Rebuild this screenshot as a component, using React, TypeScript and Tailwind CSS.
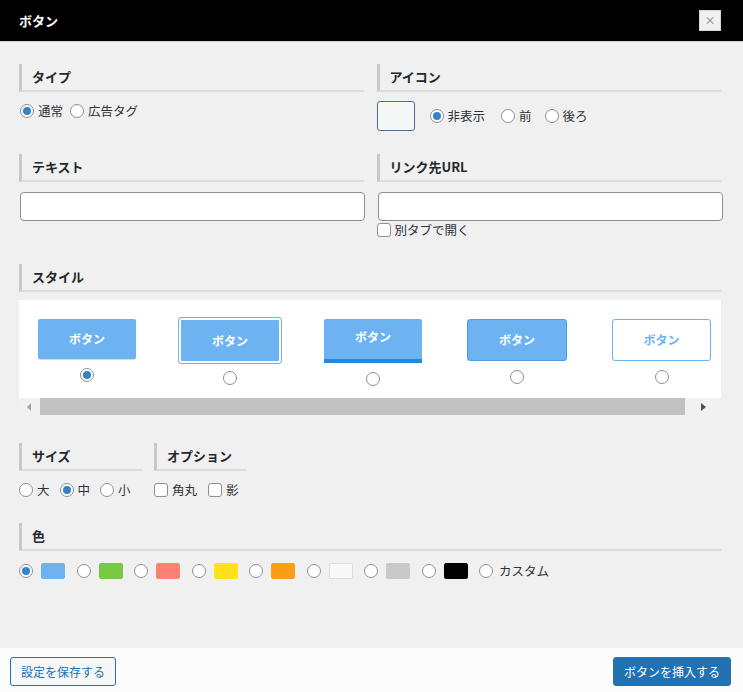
import React from 'react';

const font = { fontFamily: '"Noto Sans CJK JP", "Noto Sans", sans-serif' };

const Radio: React.FC<{ checked?: boolean }> = ({ checked }) => (
  <span className="flex items-center justify-center w-[14px] h-[14px] rounded-full border border-[#8c8f94] bg-white shrink-0">
    {checked && <span className="w-[8px] h-[8px] rounded-full bg-[#3582c4]"></span>}
  </span>
);

const Check: React.FC = () => (
  <span className="w-[14px] h-[14px] rounded-[3px] border border-[#8c8f94] bg-white shrink-0"></span>
);

const Heading: React.FC<{ children: React.ReactNode; className?: string }> = ({ children, className }) => (
  <div
    className={`flex items-center h-[28px] pl-[10px] border-l-[3px] border-l-[#c8c8c8] border-b-2 border-b-[#dcdcdc] text-[13px] font-semibold text-[#23282d] ${className ?? ''}`}
  >
    {children}
  </div>
);

const Opt: React.FC<{ checked?: boolean; label: string; className?: string }> = ({ checked, label, className }) => (
  <label className={`flex items-center gap-[4px] ${className ?? ''}`}>
    <Radio checked={checked} />
    <span>{label}</span>
  </label>
);

const swatches = ['#6db3f2', '#77c940', '#fb8273', '#ffe21c', '#f99f11', '#f8f8f8', '#c9c9c9', '#000000'];

const App: React.FC = () => {
  return (
    <div style={font} className="w-[743px] h-[692px] flex flex-col bg-[#f0f0f0] text-[12.5px] text-[#2c3338]">
      {/* title bar */}
      <div className="h-[42px] bg-black border-b border-[#cccccc] flex items-center justify-between pl-[19px] pr-[22px]">
        <span className="text-white text-[13px] font-bold">ボタン</span>
        <button className="w-[22px] h-[21px] bg-[#f0f0f0] border border-[#d6d6d6] text-[#777] text-[11px] leading-none flex items-center justify-center">
          ×
        </button>
      </div>

      <div className="flex-1 pl-[19px] pr-[22px] pt-[22px]">
        {/* type / icon */}
        <div className="grid grid-cols-2 gap-x-[13px]">
          <div>
            <Heading>タイプ</Heading>
            <div className="flex items-center h-[20px] mt-[9px] pl-[1px]">
              <Opt checked label="通常" />
              <Opt label="広告タグ" className="ml-[7px]" />
            </div>
          </div>
          <div>
            <Heading>アイコン</Heading>
            <div className="flex items-center mt-[9px]">
              <span className="w-[38px] h-[30px] rounded-[3px] border border-[#4a6f93] bg-[#f6f7f7]"></span>
              <Opt checked label="非表示" className="ml-[15px]" />
              <Opt label="前" className="ml-[16px]" />
              <Opt label="後ろ" className="ml-[13px]" />
            </div>
          </div>
        </div>

        {/* text / url */}
        <div className="grid grid-cols-2 gap-x-[13px] mt-[23px]">
          <div>
            <Heading>テキスト</Heading>
            <input className="mt-[10px] ml-[1px] w-[345px] h-[29px] rounded-[4px] border border-[#8c8f94] bg-white" />
          </div>
          <div>
            <Heading>リンク先URL</Heading>
            <input className="mt-[10px] ml-[1px] w-[345px] h-[29px] rounded-[4px] border border-[#8c8f94] bg-white" />
            <label className="flex items-center gap-[4px] mt-[1px] h-[16px]">
              <Check />
              <span>別タブで開く</span>
            </label>
          </div>
        </div>

        {/* style */}
        <Heading className="mt-[26px]">スタイル</Heading>
        <div className="mt-[8px] bg-white overflow-hidden">
          <div className="h-[98px] flex items-start gap-[45px] pl-[19px] pt-[19px]">
            <div className="flex flex-col items-center w-[98px] shrink-0">
              <div className="w-[98px] h-[40px] rounded-[2px] bg-[#6db3f2] shadow-[0_1px_1px_rgba(0,0,0,0.15)] flex items-center justify-center text-white font-bold text-[12px]">
                ボタン
              </div>
              <div className="mt-[9px]"><Radio checked /></div>
            </div>
            <div className="flex flex-col items-center w-[98px] shrink-0 -mt-[1px]">
              <div className="w-[102px] h-[45px] rounded-[3px] border-2 border-white bg-[#6db3f2] shadow-[0_0_0_1px_#6db3f2] flex items-center justify-center text-white font-bold text-[12px]">
                ボタン
              </div>
              <div className="mt-[8px]"><Radio /></div>
            </div>
            <div className="flex flex-col items-center w-[98px] shrink-0">
              <div className="w-[98px] h-[44px] rounded-t-[2px] bg-[#6db3f2] border-b-[4px] border-[#2589d8] flex items-center justify-center text-white font-bold text-[12px] pb-[4px]">
                ボタン
              </div>
              <div className="mt-[9px]"><Radio /></div>
            </div>
            <div className="flex flex-col items-center w-[100px] shrink-0">
              <div className="w-[100px] h-[42px] rounded-[3px] bg-[#6db3f2] border border-[#4b9de0] flex items-center justify-center text-white font-bold text-[12px]">
                ボタン
              </div>
              <div className="mt-[9px]"><Radio /></div>
            </div>
            <div className="flex flex-col items-center w-[99px] shrink-0">
              <div className="w-[99px] h-[42px] rounded-[3px] bg-white border border-[#6db3f2] flex items-center justify-center text-[#6db3f2] font-semibold text-[12px]">
                ボタン
              </div>
              <div className="mt-[9px]"><Radio /></div>
            </div>
          </div>
          <div className="h-[17px] bg-[#f1f1f1] flex items-center">
            <div className="w-[21px] flex items-center justify-center">
              <svg width="5" height="8" viewBox="0 0 5 8"><path d="M4 0 L0 4 L4 8 Z" fill="#a3a3a3" /></svg>
            </div>
            <div className="w-[645px] h-[17px] bg-[#c1c1c1]"></div>
            <div className="flex-1 flex items-center justify-center">
              <svg width="5" height="8" viewBox="0 0 5 8"><path d="M0 0 L5 4 L0 8 Z" fill="#505050" /></svg>
            </div>
          </div>
        </div>

        {/* size / option */}
        <div className="flex gap-[12px] mt-[28px]">
          <div className="w-[123px]">
            <Heading>サイズ</Heading>
            <div className="flex items-center h-[20px] mt-[9px]">
              <Opt label="大" />
              <Opt checked label="中" className="ml-[10px]" />
              <Opt label="小" className="ml-[10px]" />
            </div>
          </div>
          <div className="w-[92px]">
            <Heading>オプション</Heading>
            <div className="flex items-center h-[20px] mt-[9px]">
              <label className="flex items-center gap-[4px]">
                <Check />
                <span>角丸</span>
              </label>
              <label className="flex items-center gap-[4px] ml-[11px]">
                <Check />
                <span>影</span>
              </label>
            </div>
          </div>
        </div>

        {/* colour */}
        <Heading className="mt-[23px]">色</Heading>
        <div className="flex items-center h-[20px] mt-[10px]">
          {swatches.map((c, i) => (
            <div key={c} className="flex items-center w-[57.5px] shrink-0">
              <Radio checked={i === 0} />
              <span
                className="ml-[8px] w-[24px] h-[16px] rounded-[2px] border"
                style={{ backgroundColor: c, borderColor: c === '#f8f8f8' ? '#dddddd' : c }}
              ></span>
            </div>
          ))}
          <Opt label="カスタム" className="gap-[6px]" />
        </div>
      </div>

      {/* footer */}
      <div className="h-[44px] bg-[#fcfcfc] flex items-start justify-between pl-[10px] pr-[12px] pt-[9px]">
        <button className="h-[29px] px-[10px] rounded-[3px] border border-[#2271b1] bg-[#f6f7f7] text-[#2271b1] text-[12px]">
          設定を保存する
        </button>
        <button className="h-[29px] px-[10px] rounded-[3px] border border-[#2271b1] bg-[#2271b1] text-white text-[12px]">
          ボタンを挿入する
        </button>
      </div>
    </div>
  );
};

export default App;
